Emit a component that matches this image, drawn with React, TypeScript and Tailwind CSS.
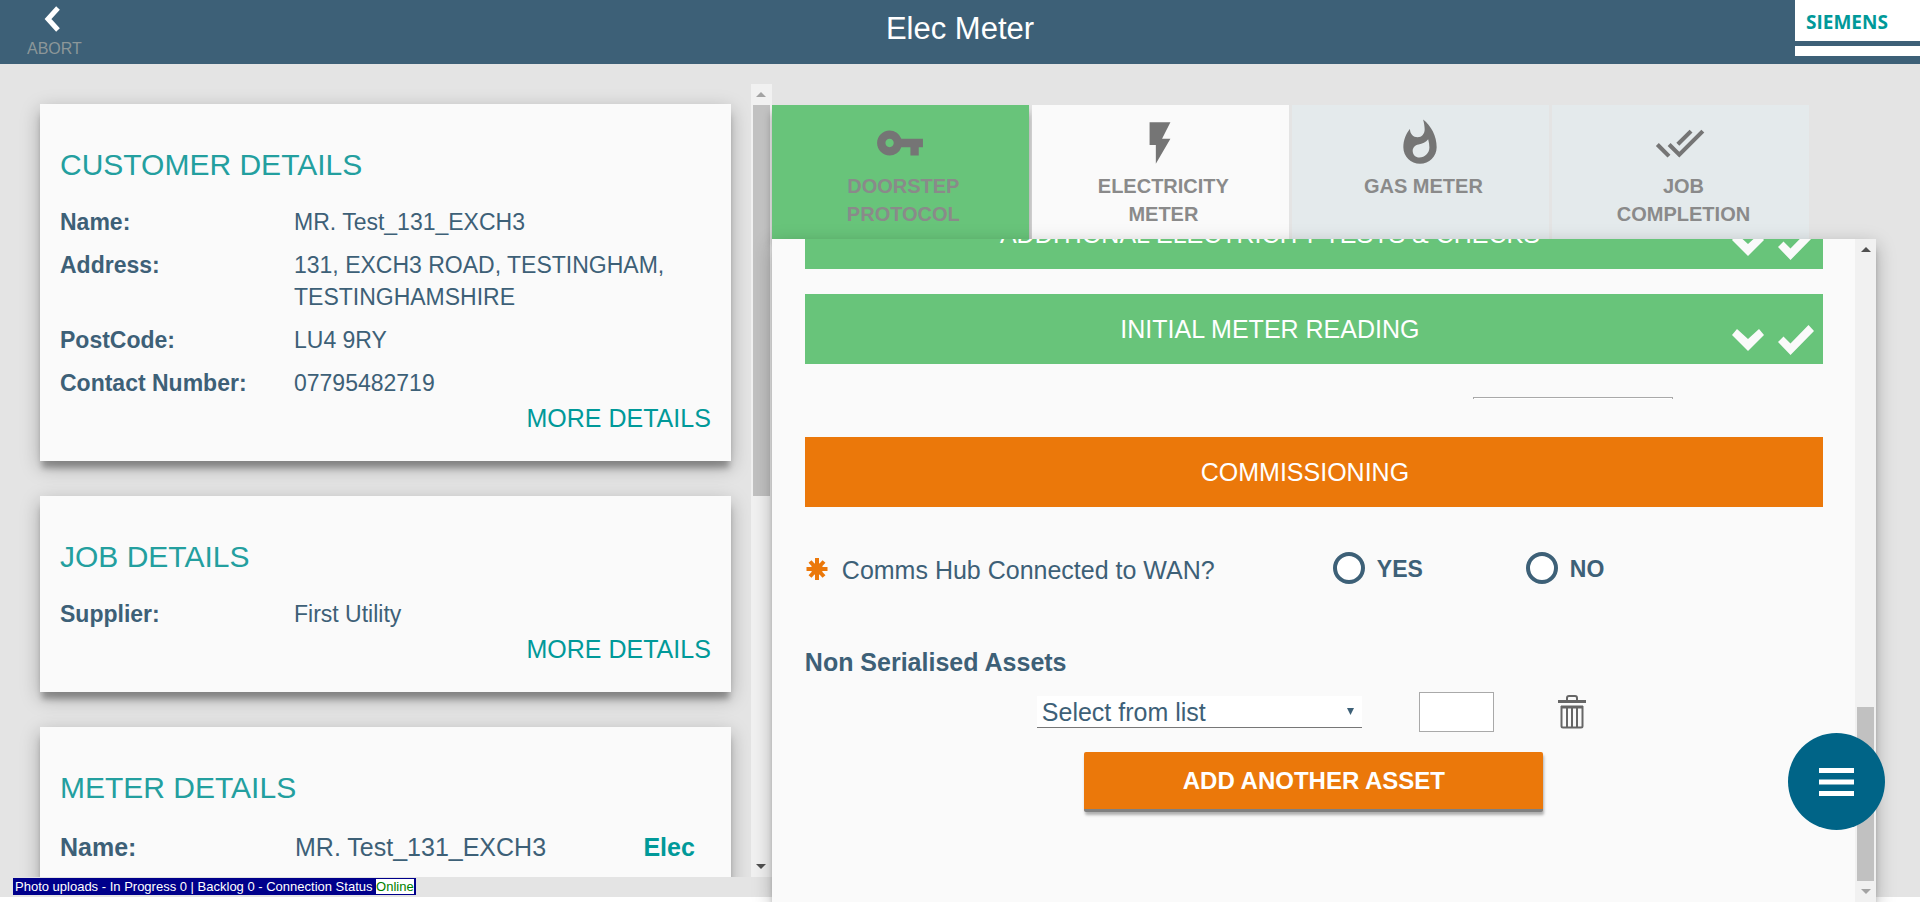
import type { ReactNode } from "react";
import { MdDoneAll, MdFlashOn, MdVpnKey, MdWhatshot } from "react-icons/md";

const panelShadow = "shadow-[0_9px_6px_-2px_rgba(0,0,0,0.28),0_6px_18px_rgba(0,0,0,0.28)]";

function Card({ title, children }: { title: string; children: ReactNode }) {
  return (
    <section className={`${panelShadow} shrink-0 bg-[#fafafa] px-5 pt-[43px] pb-[25px] text-[#3d6077]`}>
      <h2 className="mb-[23px] text-[30px] leading-[36px] text-[#239f9f]">{title}</h2>
      {children}
    </section>
  );
}

function Row({ label, children }: { label: string; children: ReactNode }) {
  return (
    <div className="mb-[11px] flex text-[23px] leading-[32px]">
      <dt className="w-[234px] shrink-0 font-bold">{label}</dt>
      <dd className="flex-1">{children}</dd>
    </div>
  );
}

function MoreDetails() {
  return (
    <div className="-mt-[10px] text-right text-[25px] leading-[36px]">
      <a href="#more" className="text-[#009999]">MORE DETAILS</a>
    </div>
  );
}

function Arrow({ down, color }: { down?: boolean; color: string }) {
  return (
    <div className="flex h-[21px] items-center justify-center">
      <svg width="10" height="5" viewBox="0 0 10 5" fill={color}>
        {down ? <path d="M0 0h10L5 5z" /> : <path d="M0 5h10L5 0z" />}
      </svg>
    </div>
  );
}

function Chevron() {
  return (
    <svg width="32" height="22" viewBox="0 0 32 22" fill="#fafafa">
      <path d="M0 6 5 0 16 10 27 0 32 6 16 22z" />
    </svg>
  );
}

function Tick() {
  return (
    <svg width="36" height="30" viewBox="0 0 36 30" fill="#fafafa">
      <path d="M0 17 5.5 11.5 12.5 18.5 30.5 0 36 6 12.5 30z" />
    </svg>
  );
}

function DoneBar({ title }: { title: string }) {
  return (
    <button type="button" className="relative mb-[25px] block h-[70px] w-full bg-[#68c47a] pt-[2px] pr-[88px] text-center text-[25px] text-white">
      {title}
      <span className="absolute right-[9px] bottom-[9px] flex items-center gap-[14px]">
        <Chevron />
        <Tick />
      </span>
    </button>
  );
}

function Tab({ icon, label, tone }: { icon: ReactNode; label: ReactNode; tone: string }) {
  return (
    <button type="button" role="tab" className={`${tone} flex h-[134px] flex-col items-center pt-[13px] text-[#757575]`}>
      {icon}
      <span className="mt-1 pl-[6px] text-[20px] leading-[28px] font-bold text-[#8a8a8a]">{label}</span>
    </button>
  );
}

function Radio({ label }: { label: string }) {
  return (
    <label className="flex w-[193px] items-center gap-3 text-[23px] font-bold">
      <input type="radio" name="wan" className="size-8 appearance-none rounded-full border-4 border-[#3d6077] bg-white checked:bg-[#3d6077]" />
      <span className="pt-[2px]">{label}</span>
    </label>
  );
}

export default function App() {
  return (
    <div className="flex h-screen flex-col overflow-hidden bg-white font-['Liberation_Sans',Arial,sans-serif]">
      <header className="grid h-16 shrink-0 grid-cols-3 bg-[#3d6077]">
        <button type="button" className="ml-[27px] flex flex-col items-start justify-self-start pt-[6px] text-[16px] leading-[20px] text-[#8c9799]">
          <svg className="ml-4" width="18" height="26" viewBox="0 0 18 26" fill="none" stroke="#fff" strokeWidth="5">
            <path d="M15 2 5 13 15 24" />
          </svg>
          <span className="mt-[7px]">ABORT</span>
        </button>
        <h1 className="justify-self-center pt-[11px] text-[31px] leading-[36px] text-white">Elec Meter</h1>
        <div className="flex h-14 w-[125px] flex-col justify-self-end bg-white">
          <span className="h-[41px] pt-[10px] pl-[11px] font-['Open_Sans',sans-serif] text-[19px] leading-[24px] font-bold text-[#009999]">SIEMENS</span>
          <span className="h-[5px] bg-[#3d6077]" />
        </div>
      </header>

      <main className="mb-[5px] flex min-h-0 flex-1 bg-[#e4e4e4]">
        <div className="flex w-[40.2%] flex-col">
          <div className="mt-5 flex min-h-0 flex-1">
            <div className="flex flex-1 flex-col gap-[35px] overflow-hidden pt-5 pr-5 pl-10">
              <Card title="CUSTOMER DETAILS">
                <dl>
                  <Row label="Name:">MR. Test_131_EXCH3</Row>
                  <Row label="Address:">131, EXCH3 ROAD, TESTINGHAM, TESTINGHAMSHIRE</Row>
                  <Row label="PostCode:">LU4 9RY</Row>
                  <Row label="Contact Number:">07795482719</Row>
                </dl>
                <MoreDetails />
              </Card>
              <Card title="JOB DETAILS">
                <dl>
                  <Row label="Supplier:">First Utility</Row>
                </dl>
                <MoreDetails />
              </Card>
              <Card title="METER DETAILS">
                <dl className="flex text-[25px] leading-[36px]">
                  <dt className="w-[235px] shrink-0 font-bold">Name:</dt>
                  <dd className="flex-1">MR. Test_131_EXCH3</dd>
                  <dd className="pr-4 font-bold text-[#009999]">Elec</dd>
                </dl>
              </Card>
            </div>
            <div aria-hidden="true" className="flex w-[21px] flex-col bg-[#f1f1f1]">
              <Arrow color="#a3a3a3" />
              <div className="mx-[2px] h-[391px] bg-[#c1c1c1]" />
              <div className="flex-1" />
              <Arrow down color="#505050" />
            </div>
          </div>
          <div className="flex h-5 items-start pt-px pl-[13px]">
            <p className="bg-[#00008b] px-[2px] text-[13px] leading-[17px] text-white">
              Photo uploads - In Progress 0 | Backlog 0 - Connection Status <span className="bg-white text-[#008000]">Online</span>
            </p>
          </div>
        </div>

        <div className="-mb-[5px] mr-11 flex flex-1 flex-col pt-[41px]">
          <div role="tablist" className="grid grid-cols-4 gap-[3px] pr-[67px]">
            <Tab icon={<MdVpnKey size={50} />} label={<>DOORSTEP<br />PROTOCOL</>} tone="bg-[#68c47a] shadow-[0_8px_8px_rgba(0,0,0,0.35)]" />
            <Tab icon={<MdFlashOn size={50} />} label={<>ELECTRICITY<br />METER</>} tone="bg-[#fafafa]" />
            <Tab icon={<MdWhatshot size={50} />} label="GAS METER" tone="bg-[#e4eaec]" />
            <Tab icon={<MdDoneAll size={50} />} label={<>JOB<br />COMPLETION</>} tone="bg-[#e4eaec]" />
          </div>

          <div className={`${panelShadow} relative flex min-h-0 flex-1 bg-[#fafafa]`}>
            <div className="flex-1 overflow-hidden pr-8 pl-[33px] text-[#3d6077]">
              <div className="-mt-10">
                <DoneBar title="ADDITIONAL ELECTRICITY TESTS & CHECKS" />
              </div>
              <DoneBar title="INITIAL METER READING" />
              <div className="mt-[33px] mr-[150px] ml-auto h-[2px] w-[200px] border-x border-t border-[#a9a9a9] bg-white" />
              <button type="button" className="mt-[38px] block h-[70px] w-full bg-[#eb780a] pt-[2px] pr-[18px] text-center text-[25px] text-white">
                COMMISSIONING
              </button>

              <div role="radiogroup" aria-labelledby="wan-question" className="mt-[45px] flex h-8 items-center text-[25px]">
                <svg className="mt-[2px] shrink-0" width="24" height="24" viewBox="0 0 24 24" stroke="#eb780a" strokeWidth="4">
                  <path d="M12 1v22M1.500 12h21M5 4.500l14 15M19 4.500 5 19.500" />
                  <circle cx="12" cy="12" r="4" fill="#eb780a" />
                </svg>
                <span id="wan-question" className="w-[504px] shrink-0 pt-[6px] pl-[13px]">Comms Hub Connected to WAN?</span>
                <Radio label="YES" />
                <Radio label="NO" />
              </div>

              <h2 className="mt-[60px] text-[25px] leading-[36px] font-bold">Non Serialised Assets</h2>
              <div className="mt-3 flex h-10 items-center pl-[232px]">
                <div className="relative flex w-[325px]">
                  <select aria-label="Asset type" className="h-8 w-full appearance-none border-b border-[#777777] bg-white pl-[5px] text-[25px] leading-[30px]">
                    <option>Select from list</option>
                  </select>
                  <svg className="absolute top-3 right-2" width="7" height="8" viewBox="0 0 7 8" fill="#3d6077">
                    <path d="M0 0h7L3.5 7z" />
                  </svg>
                </div>
                <input type="text" aria-label="Quantity" className="ml-[57px] h-10 w-[75px] border border-[#a9a9a9] bg-white px-2 text-[25px]" />
                <button type="button" aria-label="Remove asset" className="ml-16">
                  <svg width="28" height="34" viewBox="0 0 28 34" fill="none" stroke="#666" strokeWidth="2">
                    <path d="M0 6.500h28M3 12h22" strokeWidth="3" />
                    <path d="M9 6V3Q9 1 11 1H17Q19 1 19 3V6M3.500 11V31Q3.500 32.500 5 32.500H23Q24.500 32.500 24.500 31V11M9 12v20M14 12v20M19 12v20" />
                  </svg>
                </button>
              </div>
              <button type="button" className="mx-auto mt-5 block h-[60px] w-[459px] rounded-[2px] border-b-3 border-[#808080] bg-[#eb780a] text-[24px] font-bold text-white shadow-[1px_3px_3px_rgba(0,0,0,0.3)]">
                ADD ANOTHER ASSET
              </button>
            </div>
            <div aria-hidden="true" className="flex w-[21px] flex-col bg-[#f1f1f1]">
              <Arrow color="#505050" />
              <div className="flex-1" />
              <div className="mx-[2px] h-[174px] bg-[#c1c1c1]" />
              <Arrow down color="#a3a3a3" />
            </div>
            <button type="button" aria-label="Menu" className="absolute -right-[9px] bottom-[72px] flex size-[97px] items-center justify-center rounded-full bg-[#006487]">
              <svg width="35" height="28" viewBox="0 0 35 28" fill="#fff">
                <path d="M0 0h35v5H0zM0 11.500h35v5H0zM0 23h35v5H0z" />
              </svg>
            </button>
          </div>
        </div>
      </main>
    </div>
  );
}
